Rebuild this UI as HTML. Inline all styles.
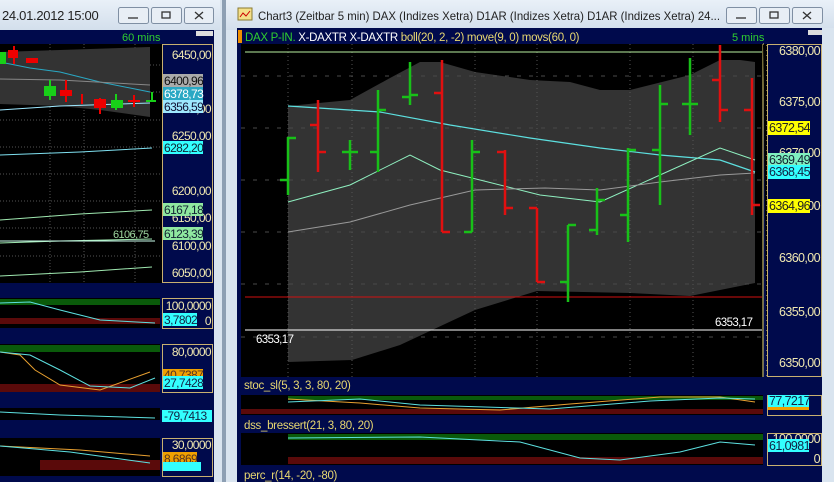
<!DOCTYPE html>
<html><head><meta charset="utf-8"><style>
html,body{margin:0;padding:0;width:834px;height:482px;overflow:hidden;background:#d6e2ee}
svg{display:block;font-family:"Liberation Sans",sans-serif}
.ax text,text.ax{letter-spacing:-0.6px}
</style></head><body>
<svg width="834" height="482" viewBox="0 0 834 482" xmlns="http://www.w3.org/2000/svg">
<defs>
<linearGradient id="tb" x1="0" y1="0" x2="0" y2="1"><stop offset="0" stop-color="#e9f0f8"/><stop offset="1" stop-color="#d3dfec"/></linearGradient>
</defs>
<rect x="0" y="0" width="834" height="482" fill="#d9e4ef"/>
<rect x="0" y="0" width="220" height="30" fill="url(#tb)"/>
<rect x="222" y="0" width="4" height="482" fill="#8d9fb3"/>
<rect x="226" y="0" width="608" height="30" fill="url(#tb)"/>
<text x="2" y="20" font-size="13" fill="#222" letter-spacing="-0.3">24.01.2012 15:00</text>
<g fill="#e8eef5" stroke="#7f8fa3">
<rect x="118.5" y="7.5" width="30" height="16" rx="2"/><rect x="151.5" y="7.5" width="30" height="16" rx="2"/><rect x="184.5" y="7.5" width="29" height="16" rx="2"/>
<rect x="726.5" y="7.5" width="30" height="16" rx="2"/><rect x="759.5" y="7.5" width="30" height="16" rx="2"/><rect x="792.5" y="7.5" width="30" height="16" rx="2"/>
</g>
<g stroke="#333" fill="none" stroke-width="1.3">
<path d="M128 18h10"/><rect x="162" y="12" width="8" height="6"/><path d="M195 12l8 7M203 12l-8 7"/>
<path d="M736 18h10"/><rect x="770" y="12" width="8" height="6"/><path d="M803 12l8 7M811 12l-8 7"/>
</g>
<rect x="238" y="8" width="14" height="12" fill="#f4e08a" stroke="#8a7a30"/><path d="M240 17l3-4 3 3 4-5" stroke="#c00" fill="none"/>
<text x="258" y="20" font-size="12" fill="#222" textLength="462" lengthAdjust="spacingAndGlyphs">Chart3 (Zeitbar 5 min)  DAX (Indizes Xetra) D1AR (Indizes Xetra) D1AR (Indizes Xetra) 24...</text>

<!-- LEFT WINDOW -->
<rect x="0" y="30" width="214" height="452" fill="#000a4c"/>
<rect x="196" y="31" width="17" height="5" fill="#ddd"/>
<text x="122" y="41" font-size="11" fill="#2fd02f">60 mins</text>
<rect x="0" y="44" width="162" height="239" fill="#000"/>
<g stroke="#555" stroke-dasharray="1,2">
<path d="M50 44v239M84 44v239M135 44v239M0 65h160M0 92h160M0 120h160M0 147h160M0 174h160M0 201h160M0 228h160M0 256h160"/>
</g>
<polygon points="0,52 60,50 150,47 150,117 100,110 60,106 0,104" fill="#333"/>
<polyline points="0,62 30,68 60,72 100,82 150,92" stroke="#2aa8c4" fill="none"/>
<polyline points="0,79 60,80 150,85" stroke="#888" fill="none"/>
<polyline points="0,110 60,106 150,103" stroke="#9ee8ff" fill="none"/>
<g fill="#e00"><rect x="8" y="50" width="10" height="8"/><rect x="26" y="58" width="12" height="5"/><rect x="60" y="90" width="12" height="6"/><rect x="94" y="99" width="12" height="9"/></g>
<g fill="#18d018"><rect x="0" y="52" width="6" height="12"/><rect x="44" y="86" width="12" height="10"/><rect x="111" y="100" width="12" height="8"/></g>
<g stroke="#e00" stroke-width="2"><path d="M14 46v18M66 80v22M82 94v10M100 98v16M134 95v12M128 101h12"/></g>
<g stroke="#18d018" stroke-width="2"><path d="M50 80v20M116 94v16M152 92v10M146 101h10"/></g>
<polyline points="0,155 80,152 152,148" stroke="#7fe0f0" fill="none"/>
<polyline points="0,220 80,214 152,210" stroke="#9fe8b0" fill="none"/>
<polyline points="0,243 60,241 152,239" stroke="#9fe8b0" fill="none"/>
<path d="M0 241h155" stroke="#cfe" />
<polyline points="0,276 80,272 152,267" stroke="#9fe8b0" fill="none"/>
<text x="113" y="238" font-size="11" fill="#9fd8a0" class="ax">6106,75</text>
<rect x="162.5" y="44.5" width="50" height="238" fill="#000a4c" stroke="#c8b070"/>
<g fill="#f0e8b0" font-size="12" text-anchor="end" class="ax">
<text x="211" y="59">6450,00</text><text x="211" y="113">6300,00</text><text x="211" y="140">6250,00</text><text x="211" y="195">6200,00</text><text x="211" y="222">6150,00</text><text x="211" y="250">6100,00</text><text x="211" y="277">6050,00</text>
</g>
<g font-size="12" class="ax">
<rect x="163" y="74" width="40" height="13" fill="#aaa"/><text x="164" y="85" fill="#111">6400,96</text>
<rect x="163" y="87" width="40" height="13" fill="#2aa8c4"/><text x="164" y="98" fill="#fff">6378,73</text>
<rect x="163" y="100" width="40" height="13" fill="#9ee8ff"/><text x="164" y="111" fill="#113">6356,59</text>
<rect x="163" y="141" width="40" height="13" fill="#3ff"/><text x="164" y="152" fill="#123">6282,20</text>
<rect x="163" y="203" width="40" height="13" fill="#8fe8a0"/><text x="164" y="214" fill="#123">6167,18</text>
<rect x="163" y="227" width="40" height="13" fill="#8fe8a0"/><text x="164" y="238" fill="#123">6123,39</text>
</g>

<rect x="0" y="298" width="160" height="30" fill="#000"/>
<rect x="0" y="299" width="160" height="6" fill="#0a5a0a"/><rect x="0" y="318" width="160" height="6" fill="#5a0a0a"/>
<polyline points="0,303 30,302 60,310 100,320 155,323" stroke="#5de0e0" fill="none"/>
<rect x="162.5" y="298.5" width="50" height="30" fill="#000a4c" stroke="#c8b070"/>
<g font-size="12" class="ax">
<text x="211" y="310" fill="#f0e8b0" text-anchor="end">100,0000</text>
<rect x="163" y="313" width="34" height="13" fill="#3ff"/><text x="164" y="324" fill="#124">3,7802</text>
<text x="211" y="325" fill="#f0e8b0" text-anchor="end">0</text>
</g>

<rect x="0" y="344" width="160" height="48" fill="#000"/>
<rect x="0" y="345" width="160" height="7" fill="#0a5a0a"/><rect x="0" y="384" width="160" height="8" fill="#5a0a0a"/>
<polyline points="0,352 20,355 35,370 60,385 100,390 150,372" stroke="#e8a030" fill="none"/>
<polyline points="0,352 30,355 60,370 90,386 130,388 155,378" stroke="#5de0e0" fill="none"/>
<rect x="162.5" y="344.5" width="50" height="48" fill="#000a4c" stroke="#c8b070"/>
<g font-size="12" class="ax">
<text x="211" y="356" fill="#f0e8b0" text-anchor="end">80,0000</text>
<rect x="163" y="369" width="40" height="11" fill="#f0a000"/><text x="164" y="379" fill="#532">40,7387</text>
<rect x="163" y="376" width="40" height="13" fill="#3ff"/><text x="164" y="387" fill="#124">27,7428</text>
</g>

<rect x="0" y="408" width="160" height="12" fill="#000"/>
<polyline points="0,412 60,415 155,418" stroke="#5de0e0" fill="none"/>
<rect x="162" y="410" width="50" height="12" fill="#3ff"/><text x="164" y="420" font-size="12" fill="#124" class="ax">-79,7413</text>

<rect x="0" y="438" width="160" height="38" fill="#000"/>
<rect x="40" y="460" width="120" height="10" fill="#5a0a0a"/>
<polyline points="0,446 80,450 150,456" stroke="#e8a030" fill="none"/>
<polyline points="0,446 70,452 150,463" stroke="#5de0e0" fill="none"/>
<rect x="162.5" y="438.5" width="50" height="38" fill="#000a4c" stroke="#c8b070"/>
<g font-size="12" class="ax">
<text x="211" y="449" fill="#f0e8b0" text-anchor="end">30,0000</text>
<rect x="163" y="452" width="34" height="12" fill="#f0a000"/><text x="164" y="463" fill="#532">8,6869</text>
<rect x="163" y="462" width="38" height="9" fill="#3ff"/>
</g>

<!-- RIGHT WINDOW -->
<rect x="237" y="28" width="585" height="454" fill="#000a4c"/>
<rect x="822" y="28" width="12" height="454" fill="#d9e4ef"/>
<rect x="808" y="30" width="14" height="5" fill="#ddd"/>
<rect x="238" y="30" width="4" height="13" fill="#f09000"/>
<text x="245" y="41" font-size="11.5" letter-spacing="-0.3"><tspan fill="#2fd02f">DAX P-IN.</tspan><tspan fill="#ffffff"> X-DAXTR X-DAXTR </tspan><tspan fill="#e8d870">boll(20, 2, -2) move(9, 0) movs(60, 0)</tspan></text>
<text x="732" y="41" font-size="11" fill="#2fd02f">5 mins</text>
<rect x="241" y="44" width="522" height="333" fill="#000"/>
<polygon points="288,106 350,100 390,78 420,62 440,62 475,72 530,80 570,82 600,90 630,90 690,75 720,60 740,60 755,62 755,283 690,296 630,293 537,291 475,310 400,345 352,360 288,362" fill="#333"/>
<g stroke="#555" stroke-dasharray="1,3">
<path d="M288 44v333M352 44v333M475 44v333M537 44v333M630 44v333M693 44v333"/>
</g>
<g stroke="#4a4a4a" stroke-dasharray="4,8">
<path d="M241 76h520M241 128h520M241 180h520M241 232h520M241 284h520M241 337h520"/>
</g>
<path d="M245 52h517" stroke="#b8f0a0"/>
<path d="M245 297h517" stroke="#d01010"/>
<path d="M245 330h517" stroke="#fff"/>
<text x="256" y="343" font-size="11.5" fill="#fff" class="ax">6353,17</text>
<text x="715" y="326" font-size="11.5" fill="#fff" class="ax">6353,17</text>
<polyline points="288,106 380,112 450,125 530,138 600,148 660,155 720,160 755,172" stroke="#5de0e0" fill="none" stroke-width="1.2"/>
<polyline points="288,202 350,185 410,155 440,170 540,195 600,202 660,175 720,148 755,160" stroke="#8ff0c0" fill="none"/>
<polyline points="288,232 350,222 410,205 475,190 545,188 600,190 660,182 720,175 755,173" stroke="#999" fill="none"/>
<g stroke-width="2.5" fill="none">
<g stroke="#18c018">
<path d="M288 137v58M280 180h8M288 138h8"/>
<path d="M350 140v30M342 152h8M350 152h8"/>
<path d="M378 90v82M370 152h8M378 110h8"/>
<path d="M410 62v43M402 97h8M410 95h8"/>
<path d="M472 140v92M464 232h8M472 152h8"/>
<path d="M568 225v77M560 282h8M568 225h8"/>
<path d="M597 188v47M589 230h8M597 200h8"/>
<path d="M628 148v94M620 215h8M628 150h8"/>
<path d="M660 85v120M652 150h8M660 104h8"/>
<path d="M690 58v77M682 104h8M690 104h8"/>
</g>
<g stroke="#e01010">
<path d="M318 100v72M310 125h8M318 152h8"/>
<path d="M442 60v172M434 93h8M442 232h8"/>
<path d="M505 150v65M497 152h8M505 208h8"/>
<path d="M537 208v74M529 208h8M537 282h8"/>
<path d="M720 45v77M712 80h8M720 110h8"/>
<path d="M752 78v137M744 110h8M752 205h8"/>
</g>
</g>
<g stroke="#e8d870"><path d="M763 44v333"/></g>
<g stroke="#e8d870" stroke-dasharray="1,4"><path d="M763 44h4v333"/></g>
<rect x="767.5" y="44.5" width="54" height="332" fill="#000a4c" stroke="#c8b070"/>
<g fill="#f0e8b0" font-size="12.5" text-anchor="end" class="ax">
<text x="820" y="55">6380,00</text><text x="820" y="106">6375,00</text><text x="820" y="157">6370,00</text><text x="820" y="210">6365,00</text><text x="820" y="262">6360,00</text><text x="820" y="316">6355,00</text><text x="820" y="367">6350,00</text>
</g>
<g font-size="12.5" class="ax">
<rect x="768" y="121" width="42" height="14" fill="#ffff00"/><text x="769" y="132" fill="#222">6372,54</text>
<rect x="768" y="153" width="42" height="13" fill="#7ff0c0"/><text x="769" y="164" fill="#123">6369,49</text>
<rect x="768" y="165" width="42" height="14" fill="#3ff"/><text x="769" y="176" fill="#124">6368,45</text>
<rect x="768" y="199" width="42" height="14" fill="#ffff00"/><text x="769" y="210" fill="#222">6364,96</text>
</g>

<text x="244" y="389" font-size="11.5" fill="#e8d870" letter-spacing="-0.3">stoc_sl(5, 3, 3, 80, 20)</text>
<rect x="241" y="395" width="522" height="20" fill="#000"/>
<rect x="288" y="396" width="475" height="4" fill="#0a5a0a"/><rect x="241" y="409" width="522" height="5" fill="#5a0a0a"/>
<polyline points="288,399 360,403 420,408 500,410 570,404 660,397 720,397 755,402" stroke="#e8a030" fill="none"/>
<polyline points="288,402 360,399 420,405 550,409 650,401 720,398 755,399" stroke="#5de0e0" fill="none"/>
<rect x="767.5" y="395.5" width="54" height="20" fill="#000a4c" stroke="#c8b070"/>
<rect x="768" y="395" width="41" height="12" fill="#3ff"/><text x="769" y="405" font-size="12.5" fill="#124" class="ax">77,7217</text>
<rect x="768" y="407" width="41" height="3" fill="#f0a000"/>

<text x="244" y="429" font-size="11.5" fill="#e8d870" letter-spacing="-0.3">dss_bressert(21, 3, 80, 20)</text>
<rect x="241" y="433" width="522" height="32" fill="#000"/>
<rect x="288" y="434" width="475" height="6" fill="#0a5a0a"/><rect x="288" y="457" width="475" height="7" fill="#5a0a0a"/>
<polyline points="288,438 420,437 520,442 580,458 620,460 680,452 720,442 755,445" stroke="#5de0e0" fill="none"/>
<rect x="767.5" y="433.5" width="54" height="32" fill="#000a4c" stroke="#c8b070"/>
<g font-size="12.5" class="ax">
<text x="820" y="443" fill="#f0e8b0" text-anchor="end">100,0000</text>
<rect x="768" y="439" width="41" height="13" fill="#3ff"/><text x="769" y="450" fill="#124">61,0981</text>
<text x="820" y="463" fill="#f0e8b0" text-anchor="end">0</text>
</g>
<text x="244" y="479" font-size="11.5" fill="#e8d870" letter-spacing="-0.3">perc_r(14, -20, -80)</text>
</svg>
</body></html>
